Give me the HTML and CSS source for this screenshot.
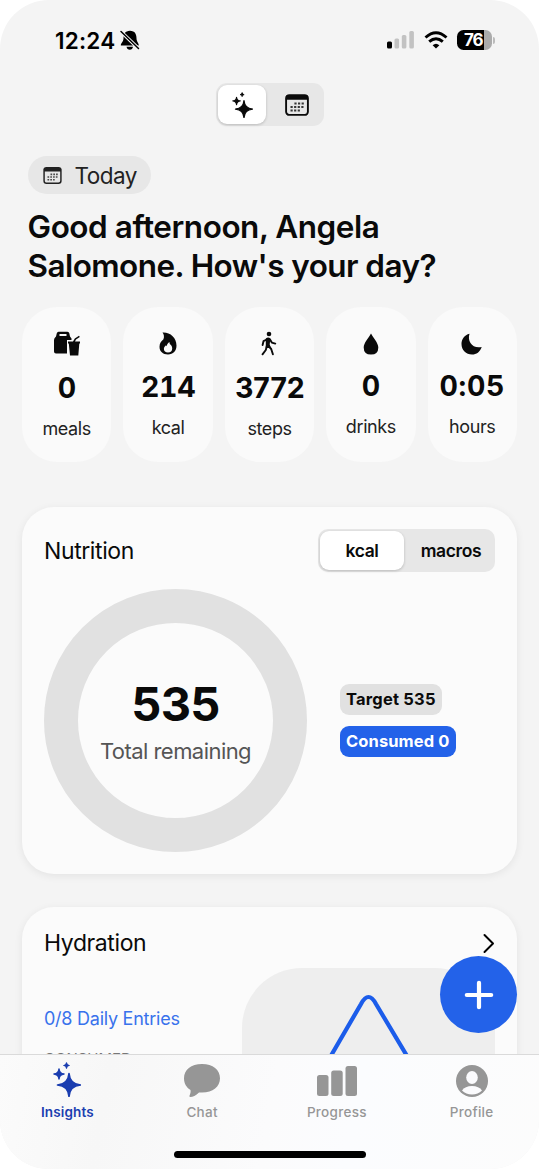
FILE: index.html
```html
<!DOCTYPE html>
<html lang="en">
<head>
<meta charset="utf-8">
<title>Insights</title>
<link rel="stylesheet" href="styles.css">
</head>
<body>
<svg width="0" height="0" class="defs">
  <symbol id="sparkles" viewBox="0 0 28 35">
    <path d="M16 11.500Q16.800 22.200 27.500 23Q16.800 23.800 16 34.500Q15.200 23.800 4.500 23Q15.200 22.200 16 11.500Z" stroke="currentColor" stroke-width="1.700" stroke-linejoin="round"/>
    <path d="M6 7Q6.400 11.600 11 12Q6.400 12.400 6 17Q5.600 12.400 1 12Q5.600 11.600 6 7Z" stroke="currentColor" stroke-width="1.500" stroke-linejoin="round"/>
    <path d="M13.500 .8Q13.700 3.300 16.200 3.500Q13.700 3.700 13.500 6.200Q13.300 3.700 10.800 3.500Q13.300 3.300 13.500 .8Z" stroke="currentColor" stroke-width="1.200" stroke-linejoin="round"/>
  </symbol>
  <symbol id="calendar" viewBox="0 0 24 22">
    <rect x="1.100" y="1.100" width="21.800" height="19.800" rx="3.200" fill="none" stroke="currentColor" stroke-width="1.900"/>
    <path d="M1 5V3Q1 1 4 1H20Q23 1 23 3V5.800H1Z"/>
    <path d="M9.400 9.500H19M5.500 13H19M5.500 16.500H15.500" stroke="currentColor" stroke-width="2.100" stroke-dasharray="2.200 1.400" opacity=".8"/>
  </symbol>
</svg>
<div class="phone">
  <main class="content">
    <header class="status">
      <span class="clock">12:24</span>
      <svg class="bell" width="20" height="21" viewBox="0 0 20 21"><path d="M10 .8C5 .8 3.500 4.500 3.500 8.200C3.500 12 .8 12.500 .8 15.500H18.800C18.800 12.500 16.500 12 16.500 8.200C16.500 4.500 15 .8 10 .8ZM6.500 16.800H13Q12.500 19.800 9.800 19.800T6.500 16.800Z"/><path d="M.8 1.500L18.500 18.500" stroke="#f4f4f4" stroke-width="3.400"/><path d="M1 1.500L18.500 18.500" stroke="#000" stroke-width="1.500" stroke-linecap="round"/></svg>
      <span class="spacer"></span>
      <svg class="signal" width="28" height="18" viewBox="0 0 28 18"><rect x="0" y="10.500" width="5" height="7" rx="1.500"/><g fill="#c2c2c2"><rect x="7.500" y="7.500" width="4.600" height="10" rx="1.500"/><rect x="14.800" y="4" width="4.600" height="13.500" rx="1.500"/><rect x="22.300" y="0" width="4.600" height="17.500" rx="1.500"/></g></svg>
      <svg class="wifi" width="24" height="18" viewBox="0 0 24 18" fill="none" stroke="#000" stroke-width="2.900"><path class="arc" d="M1.500 6.500Q12-3 22.500 6.500M5.200 10.700Q12 4.700 18.800 10.700"/><path d="M8.600 14.200Q12 11.200 15.400 14.200L12 17.600Z" fill="#000" stroke="none"/></svg>
      <div class="battery"><span class="battery-body">76</span><i class="battery-tip"></i></div>
    </header>

    <div class="switch view-switch">
      <span class="thumb"><svg class="spark-sm" width="21" height="26"><use href="#sparkles"/></svg></span>
      <span class="option"><svg width="24" height="22"><use href="#calendar"/></svg></span>
    </div>

    <div class="today"><svg width="19" height="17"><use href="#calendar"/></svg><span>Today</span></div>
    <h1 class="greeting"><span class="g1">Good afternoon, Angela</span><br><span class="g2">Salomone. How's your day?</span></h1>

    <section class="stats">
      <div class="stat low"><svg width="28" height="26" viewBox="0 0 28 26"><path fill-rule="evenodd" d="M5.500 .8H14.500Q16 .8 16.300 2.300L17 5.500L18.500 7.500V9H14V22.500H3Q1 22.500 1 20.500V9Q1 7 3 5.500L3.800 2.300Q4.200 .8 5.500 .8ZM6.500 3V5H13.500V3Z"/><path d="M15 10.500H27V12.500H26.300L25.300 24.500H17L15.800 12.500H15ZM20 10.500L21.800 7.500L26 4.800L26.800 6L23 8.500L22 10.500Z"/></svg><b>0</b><span>meals</span></div>
      <div class="stat mid"><svg width="28" height="26" viewBox="0 0 28 26"><path fill-rule="evenodd" d="M8.500 1.500C16 1 22.500 6.500 22.500 14.500C22.500 20 19.200 23.500 14 23.500C8.800 23.500 5.500 20.500 5.500 15.800C5.500 12 7.500 10 9.300 8.500C10.500 6 10 3.500 8.500 1.500ZM14 21.500C16.600 21.500 18.200 20 18.200 17.500C18.200 15.800 17.500 14.300 15.800 13L15.400 11C13.500 12.300 13 13.500 12.800 15.300L12 14.300C10.500 15.500 9.900 16.600 9.900 17.900C9.900 20 11.500 21.500 14 21.500Z"/></svg><b>214</b><span>kcal</span></div>
      <div class="stat low steps"><svg width="28" height="26" viewBox="0 0 28 26"><circle cx="14" cy="3" r="2.300"/><path d="M12.800 8L8.500 10.200L7.600 14M15 8.500L16.800 11.600L20.300 12.600M11.800 15L10.800 19L7.500 23.300M13 14.500L16.200 18L17.900 23.300" fill="none" stroke="currentColor" stroke-width="1.900" stroke-linecap="round" stroke-linejoin="round"/><path d="M10.800 7.500Q13.200 5.500 15.400 7.500L14.700 13.500L16 17H10.800Z"/></svg><b>3772</b><span>steps</span></div>
      <div class="stat high"><svg width="28" height="26" viewBox="0 0 28 26"><path d="M14 2.600C16 6.500 21.300 12 21.300 16.500Q21.300 23.600 14 23.600T6.700 16.500C6.700 12 12 6.500 14 2.600Z"/></svg><b>0</b><span>drinks</span></div>
      <div class="stat high sleep"><svg width="28" height="26" viewBox="0 0 28 26"><path d="M11.500 2.800C9 10.500 14.500 18 23.700 16C22 21 18.500 23.500 14 23.500C8 23.500 3.500 19 3.500 13C3.500 8.300 6.500 4 11.500 2.800Z"/></svg><b>0:05</b><span>hours</span></div>
    </section>

    <section class="card nutrition">
      <div class="card-head"><h2 class="t-nutrition">Nutrition</h2>
        <div class="switch unit-switch"><span class="thumb">kcal</span><span class="option">macros</span></div>
      </div>
      <div class="nutrition-body">
        <div class="ring"><b>535</b><span>Total remaining</span></div>
        <div class="badges"><span class="badge target">Target 535</span><span class="badge consumed">Consumed 0</span></div>
      </div>
    </section>

    <section class="card hydration">
      <div class="card-head"><h2 class="t-hydration">Hydration</h2>
        <svg class="chevron" width="12" height="20" viewBox="0 0 12 20"><path d="M1.500 2L10 10.500L1.500 19" fill="none" stroke="#000" stroke-width="2" stroke-linecap="round" stroke-linejoin="round"/></svg>
      </div>
      <div class="hydration-body">
        <div class="entries"><p>0/8 Daily Entries</p><small>CONSUMED</small></div>
        <div class="chart"><svg width="253" height="120" viewBox="0 0 253 120"><path d="M83 98L119 36Q126.500 22 134 36L171 98" fill="none" stroke="#1b5cea" stroke-width="4.200"/></svg></div>
      </div>
    </section>
  </main>

  <button class="fab" aria-label="Add"><svg width="30" height="30" viewBox="0 0 30 30"><path d="M15 2.800V27.200M2.800 15H27.200" stroke="#fff" stroke-width="4.200" stroke-linecap="round"/></svg></button>

  <nav class="tabs">
    <div class="tab-row">
      <a class="tab active"><svg width="36" height="38" viewBox="0 0 36 38"><use href="#sparkles" x="4" y="1" width="28" height="35"/></svg><span>Insights</span></a>
      <a class="tab"><svg width="40" height="38" viewBox="0 0 40 38"><path d="M20 3C31 3 38 9 38 17.200C38 25.500 31 31.500 20 31.500H17C14 34.500 10.500 36 8.500 36C6.800 36 7.500 34.500 8 33.500Q9 31.500 8.500 29C4.500 26.500 2 22.500 2 17.200C2 9 9 3 20 3Z"/></svg><span>Chat</span></a>
      <a class="tab"><svg width="42" height="38" viewBox="0 0 42 38"><rect x="1" y="14" width="11.500" height="21" rx="2.500"/><rect x="15.200" y="9.500" width="11.500" height="25.500" rx="2.500"/><rect x="29.500" y="5" width="11.500" height="30" rx="2.500"/></svg><span>Progress</span></a>
      <a class="tab"><svg width="34" height="38" viewBox="0 0 34 38"><circle cx="17" cy="20" r="16"/><ellipse cx="17" cy="16.500" rx="5.800" ry="6.500" fill="#fbfbfd"/><path d="M7 29.500Q10 25 17 25T27 29.500Q23 33.500 17 33.500T7 29.500Z" fill="#fbfbfd"/></svg><span>Profile</span></a>
    </div>
    <i class="home"></i>
  </nav>
</div>
</body>
</html>
```
FILE: styles.css
```css
* { box-sizing: border-box; }
body { margin: 0; background: #fff; font-family: Inter, "Liberation Sans", sans-serif; color: #0a0a0a; }
svg { display: block; fill: currentColor; overflow: visible; flex: none; }
.defs { position: absolute; }
h1, h2, p { margin: 0; }
.phone { position: relative; width: 539px; height: 1169px; border-radius: 49px; overflow: hidden; background: #f4f4f4; white-space: nowrap; }
.content { height: 1054px; overflow: hidden; padding: 0 22px; }

.status { height: 83px; padding: 26px 22px 0 33px; display: flex; align-items: flex-start; color: #000; }
.clock { font-size: 22.500px; font-weight: 600; line-height: 29px; width: 65px; letter-spacing: .2px; }
.bell { margin-top: 4px; }
.spacer { flex: 1; }
.signal { margin: 5px 9px 0 0; }
.wifi { margin: 5px 9px 0 0; }
.arc { fill: none; }
.battery { display: flex; align-items: center; margin-top: 4px; }
.battery-body { width: 35px; height: 20px; border-radius: 6.500px; background: linear-gradient(90deg, #000 76%, #ababab 76%); color: #fff; font-size: 17px; font-weight: 700; line-height: 20px; padding-left: 7px; letter-spacing: -1px; }
.battery-tip { width: 2px; height: 7px; margin-left: 1px; border-radius: 0 2px 2px 0; background: #bbb; }

.switch { display: flex; background: #e7e7e7; border-radius: 11px; height: 43px; padding: 2px; }
.switch > span { display: flex; align-items: center; justify-content: center; }
.thumb { background: #fff; border-radius: 9px; box-shadow: 0 1px 3px rgba(0,0,0,.2); }
.option { flex: 1; }
.view-switch { width: 108px; margin-left: 194px; }
.view-switch .thumb { width: 48px; padding-top: 1px; }
.view-switch .option { padding-left: 5px; }

.today { width: 123px; height: 38px; margin: 30px 0 0 5.500px; padding-left: 15px; border-radius: 19px; background: #e7e7e7; display: flex; align-items: center; gap: 13px; color: #222; font-size: 22.500px; letter-spacing: -.5px; }
.greeting { margin: 13px 0 0 5.500px; font-size: 31.500px; font-weight: 600; line-height: 39px; }
.g1 { letter-spacing: -.46px; }
.g2 { letter-spacing: -.56px; }

.stats { display: grid; grid-template-columns: repeat(5, 1fr); gap: 12px; margin-top: 22px; height: 155px; }
.stat { background: #fafafa; border-radius: 35px; display: flex; flex-direction: column; align-items: center; padding-top: 24px; }
.stat b { font-size: 28.500px; font-weight: 700; line-height: 34px; margin-top: 14px; font-variant-numeric: tabular-nums; letter-spacing: -.3px; }
.stat span { font-size: 18px; line-height: 24px; margin-top: 12px; color: #222; letter-spacing: -.4px; }
.stat.mid b { margin-top: 13px; }
.stat.high b { margin-top: 12px; }
.stat.steps b { letter-spacing: -1.300px; }
.stat.sleep b { letter-spacing: .7px; }

.card { background: #fbfbfb; border-radius: 32px; box-shadow: 0 2px 8px rgba(0,0,0,.07); padding: 0 22px; }
.card-head { display: flex; justify-content: space-between; align-items: center; }
.card h2 { font-size: 23px; font-weight: 400; line-height: 30px; letter-spacing: -.4px; }
.nutrition { height: 367px; margin-top: 45px; padding-top: 22px; }
.unit-switch { width: 177px; border-radius: 10px; font-size: 17.500px; font-weight: 600; letter-spacing: -.35px; }
.unit-switch .thumb { width: 84px; }
.unit-switch .option { padding-left: 5px; }
.nutrition-body { display: flex; align-items: center; gap: 33px; margin-top: 17px; }
.ring { width: 263px; height: 263px; border: 34px solid #e1e1e1; border-radius: 50%; display: flex; flex-direction: column; align-items: center; justify-content: center; }
.ring b { font-size: 47px; font-weight: 700; line-height: 56px; letter-spacing: -.6px; }
.ring span { font-size: 22px; line-height: 30px; color: #555; margin-top: 4px; letter-spacing: -.55px; }
.badges { display: flex; flex-direction: column; align-items: flex-start; gap: 11px; }
.badge { height: 31px; border-radius: 9px; font-size: 16.500px; font-weight: 700; line-height: 31px; padding: 0 6px; }
.target { width: 102px; background: #e1e1e1; letter-spacing: .2px; }
.consumed { width: 116px; background: #2362e9; color: #fff; letter-spacing: .1px; }

.hydration { margin-top: 33px; height: 300px; padding-top: 21px; }
.hydration-body { display: flex; justify-content: space-between; margin-top: 10px; }
.entries { padding-top: 39px; color: #3972ec; }
.entries p { font-size: 18px; line-height: 24px; letter-spacing: -.25px; }
.entries small { display: block; font-size: 15px; line-height: 20px; margin-top: 18px; color: #777; }
.chart { width: 253px; height: 200px; background: #eee; border-radius: 60px; }

.fab { position: absolute; left: 440px; top: 956px; width: 77px; height: 77px; border: 0; border-radius: 50%; background: #2362e9; padding: 0; display: flex; align-items: center; justify-content: center; }

.tabs { height: 115px; border-top: 1px solid #dadada; background: linear-gradient(100deg, #fbfbfb, #f7f7f7 20%, #fbfbfc 50%, #fbfcfe 65%, #fcfcfc); display: flex; flex-direction: column; align-items: center; }
.tab-row { display: grid; grid-template-columns: repeat(4, 1fr); width: 539px; height: 96px; padding-top: 6px; }
.tab { display: flex; flex-direction: column; align-items: center; color: #969696; font-size: 13.500px; font-weight: 500; line-height: 18px; letter-spacing: .3px; }
.tab span { margin-top: 4px; }
.tab.active { color: #1b3eb0; font-weight: 600; letter-spacing: .15px; }
.home { width: 192px; height: 7px; border-radius: 4px; background: #000; }
```
